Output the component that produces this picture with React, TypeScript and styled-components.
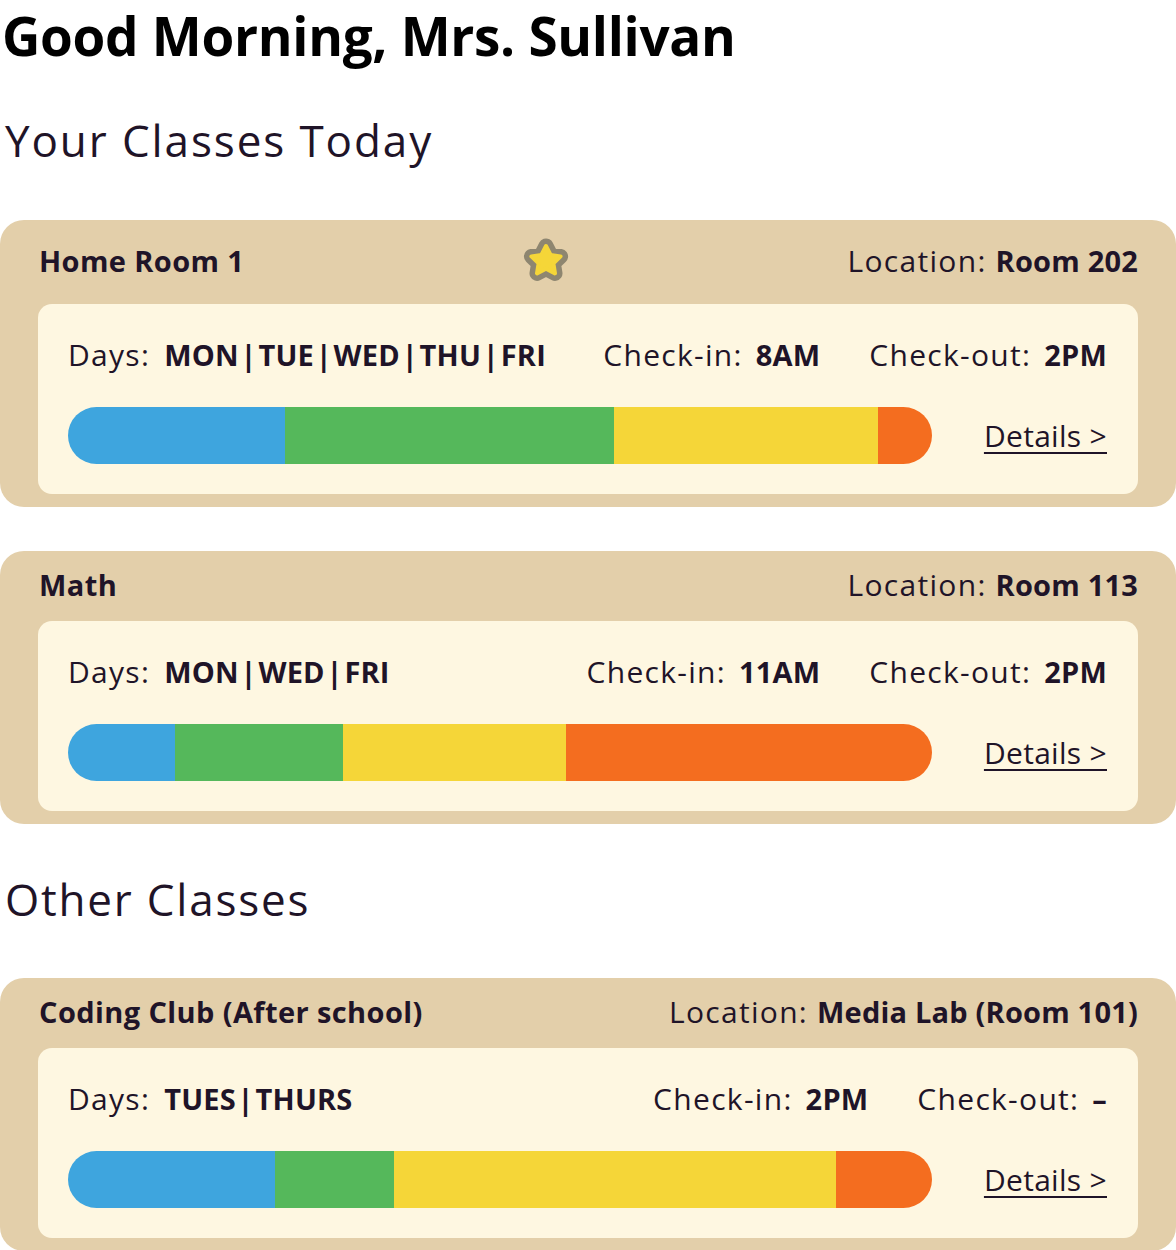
import React from "react";
import styled, { createGlobalStyle } from "styled-components";

const GlobalStyle = createGlobalStyle`
  html, body { margin: 0; padding: 0; background: #ffffff; }
  body { font-family: "Open Sans", "Noto Sans", sans-serif; color: #1f1428; }
`;

const Page = styled.main`
  width: 1176px;
  display: flex;
  flex-direction: column;
`;

const Greeting = styled.h1`
  margin: 0 0 40px 2px;
  font-family: "Open Sans", sans-serif;
  font-weight: 700;
  font-size: 53px;
  line-height: 72px;
  letter-spacing: -0.3px;
  color: #000;
`;

const SectionTitle = styled.h2<{ $after: number; $spacing: number }>`
  margin: 0 0 ${(p) => p.$after}px 5px;
  font-weight: 400;
  font-size: 44px;
  line-height: 56px;
  letter-spacing: ${(p) => p.$spacing}px;
  color: #1f1428;
`;

const Card = styled.section<{ $after: number }>`
  background: #e3cfaa;
  border-radius: 24px;
  padding: 0 38px 13px 38px;
  margin-bottom: ${(p) => p.$after}px;
`;

const CardHeader = styled.header`
  display: flex;
  align-items: center;
  justify-content: space-between;
  padding: 17px 0 19px 1px;
  min-height: 34px;
`;

const Title = styled.h3`
  margin: 0;
  font-size: 29px;
  line-height: 34px;
  font-weight: 700;
  letter-spacing: 0.4px;
`;

const Bold = styled.b`
  font-size: 29px;
  font-weight: 700;
  letter-spacing: 0.2px;
`;

const Regular = styled.span<{ $gap?: number }>`
  font-size: 30px;
  font-weight: 400;
  letter-spacing: 1.3px;
  margin-right: ${(p) => p.$gap ?? 0}px;
`;

const Location = styled.div`
  line-height: 34px;
  display: flex;
  align-items: baseline;
`;

const Panel = styled.div`
  background: #fef7e1;
  border-radius: 14px;
  padding: 33px 31px 30px 30px;
  display: flex;
  flex-direction: column;
  gap: 34px;
`;

const InfoRow = styled.div`
  display: flex;
  align-items: center;
  justify-content: space-between;
  line-height: 36px;
`;

const Field = styled.span`
  display: inline-flex;
  align-items: baseline;
`;

const DaysValue = styled(Bold)`
  word-spacing: -6px;
`;

const Times = styled.div`
  display: flex;
  gap: 49px;
`;

const BarRow = styled.div`
  display: flex;
  align-items: center;
  justify-content: space-between;
`;

const Bar = styled.div`
  width: 864px;
  height: 57px;
  border-radius: 29px;
  overflow: hidden;
  display: flex;
`;

const Segment = styled.div<{ $color: string }>`
  background: ${(p) => p.$color};
  height: 100%;
`;

const DetailsLink = styled.a`
  font-size: 30px;
  line-height: 36px;
  letter-spacing: 0.3px;
  color: #1f1428;
  text-decoration: underline;
  text-decoration-thickness: 2px;
  text-underline-offset: 5px;
  cursor: pointer;
`;

const COLORS = ["#3ea5de", "#55b85b", "#f5d638", "#f46d1f"];

const STAR_PATH =
  "M24 9 L28.6 17.9 L38.6 19.4 L31.4 26.4 L33 36.4 L24 31.7 L15 36.4 L16.6 26.4 L9.4 19.4 L19.4 17.9 Z";

const Star = () => (
  <svg width="48" height="48" viewBox="0 0 48 48" aria-hidden="true">
    <g strokeLinejoin="round">
      <path d={STAR_PATH} fill="#8e8670" stroke="#8e8670" strokeWidth="15" />
      <path d={STAR_PATH} fill="#f5d638" stroke="#f5d638" strokeWidth="4" />
    </g>
  </svg>
);

type ClassInfo = {
  title: string;
  starred?: boolean;
  location: string;
  days: string;
  checkIn: string;
  checkOut: string;
  segments: number[];
  after: number;
};

const ClassCard = ({ c }: { c: ClassInfo }) => (
  <Card $after={c.after}>
    <CardHeader>
      <Title>{c.title}</Title>
      {c.starred && <Star />}
      <Location>
        <Regular $gap={9}>Location:</Regular>
        <Bold>{c.location}</Bold>
      </Location>
    </CardHeader>
    <Panel>
      <InfoRow>
        <Field>
          <Regular $gap={14}>Days:</Regular>
          <DaysValue>{c.days}</DaysValue>
        </Field>
        <Times>
          <Field>
            <Regular $gap={13}>Check-in:</Regular>
            <Bold>{c.checkIn}</Bold>
          </Field>
          <Field>
            <Regular $gap={13}>Check-out:</Regular>
            <Bold>{c.checkOut}</Bold>
          </Field>
        </Times>
      </InfoRow>
      <BarRow>
        <Bar>
          {c.segments.map((w, i) => (
            <Segment key={i} $color={COLORS[i]} style={{ width: `${w}px` }} />
          ))}
        </Bar>
        <DetailsLink>Details &gt;</DetailsLink>
      </BarRow>
    </Panel>
  </Card>
);

const today: ClassInfo[] = [
  {
    title: "Home Room 1",
    starred: true,
    location: "Room 202",
    days: "MON | TUE | WED | THU | FRI",
    checkIn: "8AM",
    checkOut: "2PM",
    segments: [217, 329, 264, 54],
    after: 44,
  },
  {
    title: "Math",
    location: "Room 113",
    days: "MON | WED | FRI",
    checkIn: "11AM",
    checkOut: "2PM",
    segments: [107, 168, 223, 366],
    after: 47,
  },
];

const other: ClassInfo[] = [
  {
    title: "Coding Club (After school)",
    location: "Media Lab (Room 101)",
    days: "TUES | THURS",
    checkIn: "2PM",
    checkOut: "–",
    segments: [207, 119, 442, 96],
    after: 0,
  },
];

export default function App() {
  return (
    <Page>
      <GlobalStyle />
      <Greeting>Good Morning, Mrs. Sullivan</Greeting>
      <SectionTitle $after={52} $spacing={1.9}>
        Your Classes Today
      </SectionTitle>
      {today.map((c) => (
        <ClassCard key={c.title} c={c} />
      ))}
      <SectionTitle $after={51} $spacing={1.8}>
        Other Classes
      </SectionTitle>
      {other.map((c) => (
        <ClassCard key={c.title} c={c} />
      ))}
    </Page>
  );
}
